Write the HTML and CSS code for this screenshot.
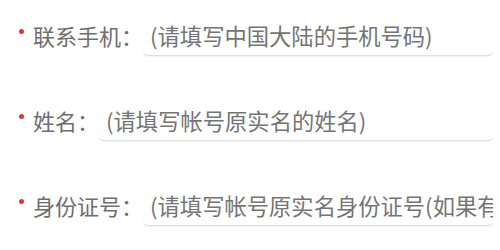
FILE: index.html
```html
<!DOCTYPE html>
<html lang="zh-CN">
<head>
<meta charset="utf-8">
<link rel="stylesheet" href="styles.css">
</head>
<body>
<form class="form">
  <div class="row">
    <span class="dot"></span>
    <label class="label">联系手机：</label>
    <input class="field" type="text" placeholder="(请填写中国大陆的手机号码)">
  </div>
  <div class="row">
    <span class="dot"></span>
    <label class="label">姓名：</label>
    <input class="field" type="text" placeholder="(请填写帐号原实名的姓名)">
  </div>
  <div class="row">
    <span class="dot"></span>
    <label class="label">身份证号：</label>
    <input class="field" type="text" placeholder="(请填写帐号原实名身份证号(如果有)">
  </div>
</form>
</body>
</html>
```
FILE: styles.css
```css
html, body {
  margin: 0;
  padding: 0;
  background: #ffffff;
}
body {
  width: 500px;
  height: 250px;
  overflow: hidden;
  font-family: "Noto Sans CJK SC", "Noto Sans", sans-serif;
}
.form {
  display: flex;
  flex-direction: column;
  gap: 45px;
  padding: 15px 7px 0 19px;
}
.row {
  display: flex;
  align-items: center;
  height: 40px;
}
.dot {
  width: 5px;
  height: 5px;
  border-radius: 50%;
  background: #e3342f;
  margin-right: 9px;
  align-self: flex-start;
  margin-top: 14px;
}
.label {
  font-size: 22px;
  color: #6e6e6e;
  white-space: nowrap;
  line-height: 40px;
}
.field {
  flex: 1;
  min-width: 0;
  height: 40px;
  box-sizing: border-box;
  border: none;
  outline: none;
  border-radius: 5px;
  background: #fff;
  box-shadow: 0 2px 2px -1px rgba(0, 0, 0, 0.18);
  padding: 0 0 0 7px;
  font-family: "Noto Sans CJK SC", "Noto Sans", sans-serif;
  font-size: 22.3px;
  color: #6e6e6e;
}
.field::placeholder {
  color: #747474;
  opacity: 1;
}
```
